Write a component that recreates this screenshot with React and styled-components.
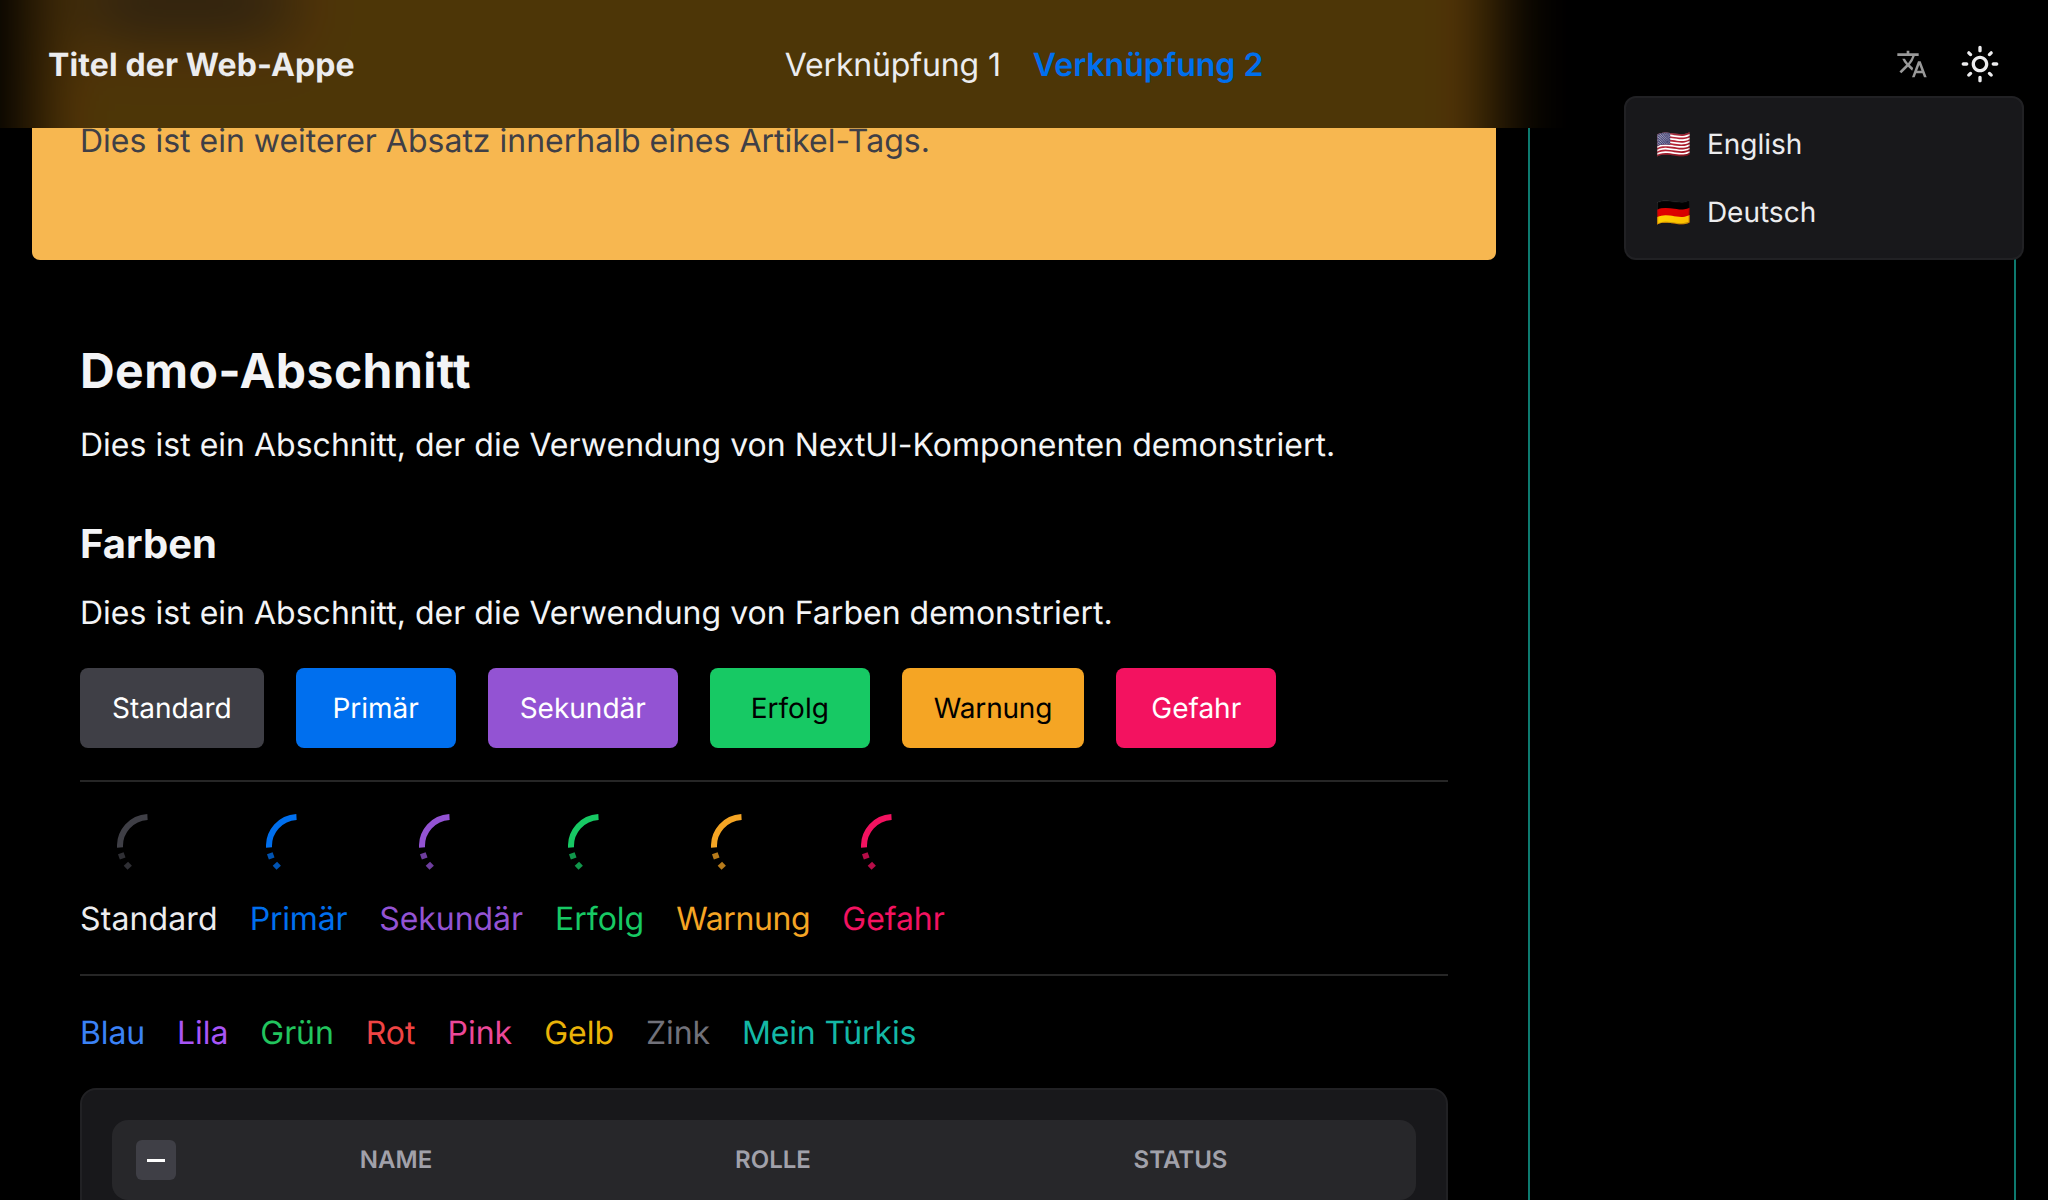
import React from 'react';
import styled, { createGlobalStyle } from 'styled-components';
import { MdTranslate, MdOutlineLightMode } from 'react-icons/md';

const Global = createGlobalStyle`
  *{box-sizing:border-box}
  html,body{margin:0;height:1200px;overflow:hidden;background:#000}
  body{font-family:Inter,"Noto Color Emoji",sans-serif;color:#f3f4f6;font-size:32px;line-height:48px;text-rendering:geometricPrecision}
  h1,h2,h3,p{margin:0}
`;
const Page = styled.div`position:relative;height:1200px;overflow:hidden;background:#000;`;
const Header = styled.header`
  position:absolute;inset:0 0 auto 0;height:128px;z-index:2;overflow:hidden;
  display:grid;grid-template-columns:1fr auto 1fr;align-items:center;padding:0 48px;
  background:#000;isolation:isolate;
`;
const Glass = styled.div`
  position:absolute;inset:-160px;z-index:-1;opacity:.3;
  background:
    linear-gradient(#3f3f46,#3f3f46) 244px 142px / 204px 38px no-repeat,
    linear-gradient(#3f3f4620,#3f3f4620) 230px 100px / 240px 130px no-repeat,
    linear-gradient(#f7b750,#f7b750) 192px 0 / 1464px 100% no-repeat,
    #000;
  filter:blur(35px) saturate(1.5);
`;
const Brand = styled.div`padding-top:2px;font-weight:700;letter-spacing:.12px;color:#ececee;`;
const Nav = styled.nav`padding-top:2px;display:flex;gap:32px;`;
const NavLink = styled.span`
  color:${p => p.$active ? '#006fee' : '#ececee'};font-weight:${p => p.$active ? 600 : 400};
  letter-spacing:${p => p.$active ? 0 : -.14}px;
`;
const Tools = styled.div`display:flex;justify-content:flex-end;align-items:center;gap:32px;svg{display:block}`;
const Menu = styled.div`
  position:absolute;left:1624px;top:96px;z-index:3;width:400px;height:164px;
  padding:12px 30px;border:2px solid #212124;border-radius:12px;background:#18181b;
  display:flex;flex-direction:column;
`;
const MenuItem = styled.div`flex:0 0 68px;display:flex;align-items:center;gap:16px;font-size:28px;line-height:40px;color:#ececee;`;
const Body = styled.div`display:flex;height:1200px;`;
const Main = styled.main`width:1528px;padding:0 32px;`;
const Article = styled.article`height:260px;padding:117px 48px 0;background:#f7b750;border-radius:0 0 8px 8px;color:#3f3f46;`;
const Aside = styled.aside`width:488px;border:solid #0d7a6f;border-width:0 2px;`;
const Section = styled.section`padding:79px 48px 0;`;
const Title = styled.h2`font-size:48px;line-height:64px;font-weight:700;letter-spacing:.45px;`;
const Sub = styled.h3`margin-top:47px;font-size:40px;line-height:56px;font-weight:700;`;
const Text = styled.p`margin-top:${p => p.$top}px;letter-spacing:.015px;`;
const Row = styled.div`display:flex;gap:32px;margin-top:${p => p.$top || 0}px;`;
const Button = styled.button`
  height:80px;min-width:160px;padding:0 32px;border:0;border-radius:8px;text-rendering:inherit;
  font:400 28px/40px Inter,sans-serif;letter-spacing:${p => p.$track}px;background:${p => p.$bg};color:${p => p.$fg};
`;
const Divider = styled.hr`height:2px;border:0;margin:${p => p.$top}px 0 0;background:#262626;`;
const Load = styled.div`
  display:flex;flex-direction:column;align-items:center;gap:17px;
  color:${p => p.$color};letter-spacing:${p => p.$track}px;svg{display:block}
`;
const Tint = styled.span`color:${p => p.$color};letter-spacing:${p => p.$track}px;`;
const Table = styled.div`margin-top:31px;height:200px;padding:30px;border:2px solid #212124;border-radius:16px;background:#18181b;`;
const TableHead = styled.div`
  height:80px;border-radius:16px;background:#27272a;display:grid;grid-template-columns:88px 392px 362px 453px;
  align-items:center;text-align:center;font-size:24px;line-height:32px;font-weight:600;color:#a1a1aa;
`;
const Check = styled.div`
  width:40px;height:40px;margin-left:24px;border-radius:6px;background:#3f3f46;display:grid;place-items:center;
  &::after{content:'';width:18px;height:3px;background:#fff}
`;

const colors = [
  { name: 'Standard', bg: '#3f3f46', fg: '#fff', label: '#ececee', track: .12 },
  { name: 'Primär', bg: '#006fee', fg: '#fff', label: '#006fee', track: -.2 },
  { name: 'Sekundär', bg: '#9353d3', fg: '#fff', label: '#9353d3', track: -.06 },
  { name: 'Erfolg', bg: '#17c964', fg: '#000', label: '#17c964', track: 0 },
  { name: 'Warnung', bg: '#f5a524', fg: '#000', label: '#f5a524', track: -.38, buttonTrack: -.18 },
  { name: 'Gefahr', bg: '#f31260', fg: '#fff', label: '#f31260', track: -.1 },
];
const tints = [
  ['Blau', '#3b82f6', -.15], ['Lila', '#a855f7', -.05], ['Grün', '#22c55e', -.1], ['Rot', '#ef4444', 0],
  ['Pink', '#ec4899', 0], ['Gelb', '#eab308', 0], ['Zink', '#71717a', -.1], ['Mein Türkis', '#14b8a6', -.15],
];

const Spinner = ({ color }) => (
  <svg width="64" height="64" viewBox="0 0 64 64" fill="none">
    <path d="M3 32A29 29 0 0 1 32 3" stroke={color} strokeWidth="6" transform="rotate(-3 32 32)" />
    <g opacity=".75" fill={color}>
      <rect x="58" y="29.2" width="6" height="5.6" transform="rotate(160 32 32)" />
      <rect x="58" y="29.2" width="6" height="5.6" transform="rotate(137 32 32)" />
    </g>
  </svg>
);

export default function App() {
  return (
    <Page>
      <Global />
      <Header>
        <Glass />
        <Brand>Titel der Web-Appe</Brand>
        <Nav><NavLink>Verknüpfung 1</NavLink><NavLink $active>Verknüpfung 2</NavLink></Nav>
        <Tools><MdTranslate size={32} color="#999" /><MdOutlineLightMode size={40} color="#ececee" /></Tools>
      </Header>
      <Menu>
        <MenuItem><span>🇺🇸</span><span>English</span></MenuItem>
        <MenuItem><span>🇩🇪</span><span>Deutsch</span></MenuItem>
      </Menu>
      <Body>
        <Main>
          <Article><p>Dies ist ein weiterer Absatz innerhalb eines Artikel-Tags.</p></Article>
          <Section>
            <Title>Demo-Abschnitt</Title>
            <Text $top={18}>Dies ist ein Abschnitt, der die Verwendung von NextUI-Komponenten demonstriert.</Text>
            <Sub>Farben</Sub>
            <Text $top={17}>Dies ist ein Abschnitt, der die Verwendung von Farben demonstriert.</Text>
            <Row $top={31}>
              {colors.map(c => <Button key={c.name} $bg={c.bg} $fg={c.fg} $track={c.buttonTrack || 0}>{c.name}</Button>)}
            </Row>
            <Divider $top={32} />
            <Row $top={32}>
              {colors.map(c => <Load key={c.name} $color={c.label} $track={c.track}><Spinner color={c.bg} /><span>{c.name}</span></Load>)}
            </Row>
            <Divider $top={31} />
            <Row $top={33}>{tints.map(([n, c, t]) => <Tint key={n} $color={c} $track={t}>{n}</Tint>)}</Row>
            <Table><TableHead><Check /><span>NAME</span><span>ROLLE</span><span>STATUS</span></TableHead></Table>
          </Section>
        </Main>
        <Aside />
      </Body>
    </Page>
  );
}
